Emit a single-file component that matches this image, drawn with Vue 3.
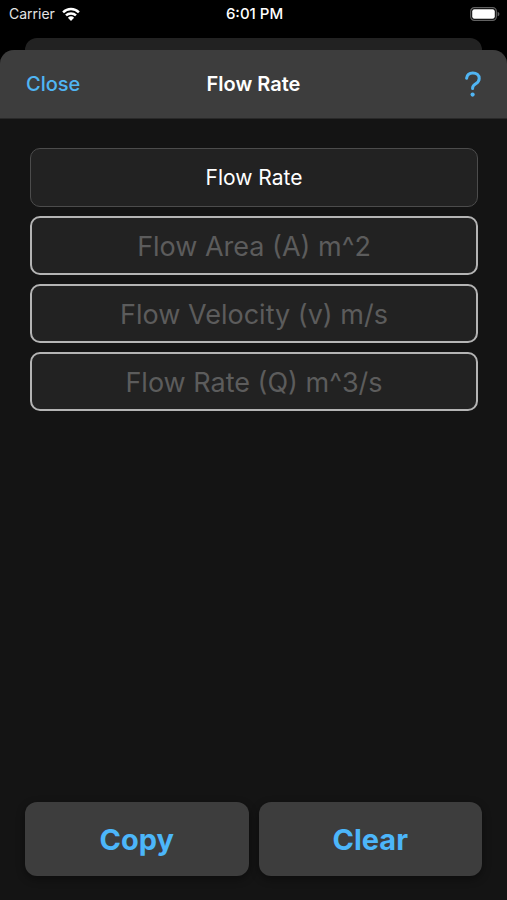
<script setup>
import { reactive, ref } from 'vue'

const formula = 'Flow Rate'
const fields = reactive([
  { id: 'area', label: 'Flow Area (A) m^2', value: '' },
  { id: 'velocity', label: 'Flow Velocity (v) m/s', value: '' },
  { id: 'rate', label: 'Flow Rate (Q) m^3/s', value: '' }
])
const open = ref(true)

function clearFields() {
  fields.forEach((field) => { field.value = '' })
}

function copyFields() {
  const text = fields.map((field) => `${field.label}: ${field.value}`).join('\n')
  navigator.clipboard?.writeText(text)
}
</script>

<template>
  <div class="screen">
    <header class="status">
      <div class="carrier">
        <span>Carrier</span>
        <svg class="wifi" viewBox="0 0 18 14" aria-hidden="true">
          <path d="M1.100 5.300a11.400 11.400 0 0 1 15.800 0" />
          <path d="M4 8.400a7.200 7.200 0 0 1 10 0" />
          <path class="solid" d="M9 13.900 5.900 10.700a4.500 4.500 0 0 1 6.200 0Z" />
        </svg>
      </div>
      <span class="time">6:01 PM</span>
      <div class="power">
        <svg class="battery" viewBox="0 0 30 14" aria-hidden="true">
          <rect class="case" x="0.7" y="0.7" width="25.6" height="12.6" rx="3.6" />
          <rect class="charge" x="2.2" y="2.2" width="22.6" height="9.6" rx="2.2" />
          <path class="tip" d="M27.6 4.7c2.4.8 2.4 3.8 0 4.6Z" />
        </svg>
      </div>
    </header>
    <div class="behind"></div>
    <main v-if="open" class="sheet">
      <nav class="bar">
        <button class="close" type="button" @click="open = false">Close</button>
        <h1 class="title">Flow Rate</h1>
        <button class="help" type="button" aria-label="Help">
          <svg class="question" viewBox="0 0 16 26" aria-hidden="true">
            <path d="M1.600 7.200C2 3.800 4.300 1.900 7.800 1.900c3.800 0 6.400 2.200 6.400 5.500 0 2.400-1.200 3.900-3.400 5.300-2.300 1.400-3.200 2.300-3.200 4.300v.5" />
            <circle cx="7.600" cy="23.600" r="2.100" />
          </svg>
        </button>
      </nav>
      <form class="form" @submit.prevent>
        <button class="formula" type="button">{{ formula }}</button>
        <input
          v-for="field in fields"
          :id="field.id"
          :key="field.id"
          v-model="field.value"
          class="field"
          type="text"
          inputmode="decimal"
          :placeholder="field.label"
          :aria-label="field.label"
        />
      </form>
      <footer class="actions">
        <button class="action" type="button" @click="copyFields">Copy</button>
        <button class="action" type="button" @click="clearFields">Clear</button>
      </footer>
    </main>
  </div>
</template>

<style>
body {
  background: #000;
}
</style>

<style scoped>
.screen {
  display: flex;
  flex-direction: column;
  min-height: 100vh;
  background: #000;
  color: #fff;
  font-family: Inter, Roboto, "Liberation Sans", sans-serif;
}

.screen *,
.screen *::before {
  box-sizing: border-box;
}

button,
input {
  margin: 0;
  padding: 0;
  font-family: inherit;
}

button {
  cursor: pointer;
}

.status {
  display: grid;
  grid-template-columns: 1fr auto 1fr;
  align-items: center;
  height: 27px;
  padding: 0 7px 0 9px;
}

.carrier {
  display: flex;
  align-items: center;
  gap: 7px;
  color: #e4e4e4;
  font-size: 14px;
}

.wifi {
  width: 18px;
  height: 14px;
  fill: none;
  stroke: #fff;
  stroke-width: 2.5;
}

.wifi .solid {
  fill: #fff;
  stroke: none;
}

.time {
  font-size: 15px;
  font-weight: 500;
}

.power {
  display: flex;
  justify-content: flex-end;
}

.battery {
  width: 30px;
  height: 14px;
}

.case {
  fill: none;
  stroke: #626262;
  stroke-width: 1.2;
}

.charge {
  fill: #fff;
}

.tip {
  fill: #626262;
}

.behind {
  height: 12px;
  margin: 11px 25px 0;
  border-radius: 12px 12px 0 0;
  background: #222;
}

.sheet {
  display: flex;
  flex: 1;
  flex-direction: column;
  overflow: hidden;
  border-radius: 14px 14px 0 0;
  background: #141414;
}

.bar {
  display: grid;
  grid-template-columns: 1fr auto 1fr;
  align-items: center;
  height: 69px;
  padding: 0 26px;
  border-bottom: 1px solid #292929;
  background: #3d3d3d;
}

.close,
.help {
  border: 0;
  background: none;
  color: #50b5f3;
}

.close {
  justify-self: start;
  font-size: 20px;
  font-weight: 500;
}

.title {
  margin: 0;
  font-size: 20px;
  font-weight: 600;
}

.help {
  display: flex;
  justify-self: end;
}

.question {
  width: 16px;
  height: 26px;
  fill: none;
  stroke: currentColor;
  stroke-width: 3;
  stroke-linecap: round;
}

.question circle {
  fill: currentColor;
  stroke: none;
}

.form {
  display: flex;
  flex-direction: column;
  gap: 9px;
  padding: 29px 29px 0 30px;
}

.formula,
.field {
  width: 100%;
  height: 59px;
  border-radius: 10px;
  background: #222;
  color: #fff;
  text-align: center;
}

.formula {
  border: 1px solid #4c4c4c;
  font-size: 21px;
}

.field {
  padding-top: 2px;
  border: 2px solid #b4b4b4;
  font-size: 27px;
}

.field::placeholder {
  color: #5c5c5c;
  opacity: 1;
}

.actions {
  display: grid;
  grid-template-columns: 1fr 1fr;
  gap: 10px;
  margin-top: auto;
  padding: 24px 25px;
}

.action {
  height: 74px;
  border: 0;
  border-radius: 12px;
  background: #3d3d3d;
  box-shadow: 0 3px 8px #0006;
  color: #4cb6fa;
  font-size: 29px;
  font-weight: 700;
}
</style>
